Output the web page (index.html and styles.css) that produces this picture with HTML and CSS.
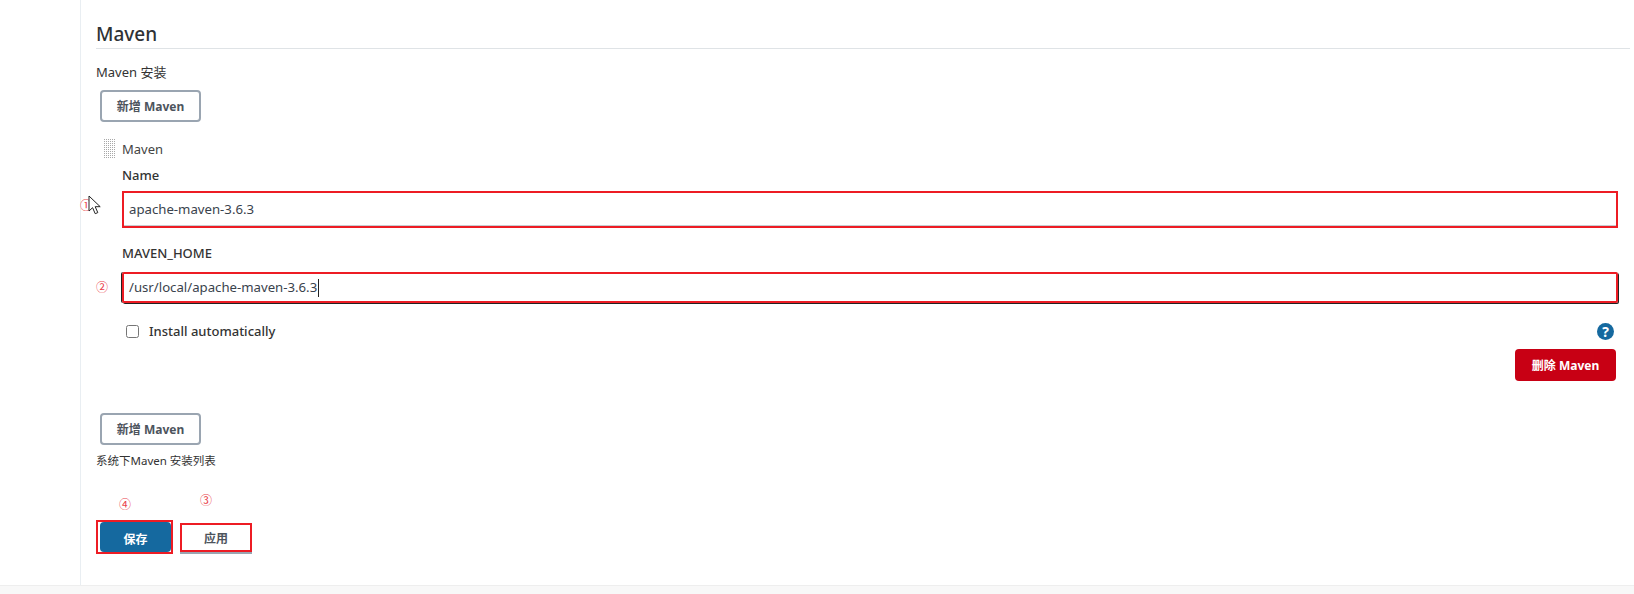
FILE: index.html
```html
<!DOCTYPE html>
<html lang="zh">
<head>
    <meta charset="UTF-8">
    <title>Maven</title>
    <link rel="stylesheet" href="styles.css">
</head>
<body>
    <div class="page">
        <div class="sidebar"></div>
        <div class="main">
            <h2 class="section-title">Maven</h2>
            <div class="field-title">Maven 安装</div>
            <button class="btn btn-add">新增 Maven</button>

            <div class="tool">
                <div class="tool-head">
                    <span class="handle"></span>
                    <span>Maven</span>
                </div>
                <div class="tool-body">
                    <div class="label">Name</div>
                    <div class="mark mark-name">
                        <div class="input input-name">apache-maven-3.6.3</div>
                    </div>
                    <div class="label label-home">MAVEN_HOME</div>
                    <div class="mark mark-home">
                        <div class="input input-home">/usr/local/apache-maven-3.6.3<span class="caret"></span></div>
                    </div>
                    <div class="auto-row">
                        <label class="check"><input type="checkbox"> Install automatically</label>
                        <span class="help">?</span>
                    </div>
                    <div class="delete-row">
                        <button class="btn btn-delete">删除 Maven</button>
                    </div>
                </div>
            </div>

            <button class="btn btn-add btn-add-second">新增 Maven</button>
            <div class="desc">系统下Maven 安装列表</div>

            <div class="actions">
                <div class="mark mark-save"><button class="btn btn-save">保存</button></div>
                <div class="mark mark-apply"><button class="btn btn-apply">应用</button></div>
            </div>
        </div>
    </div>
    <div class="footer"></div>

    <!-- annotations drawn over the screenshot -->
    <span class="note note-1">①</span>
    <svg class="cursor" width="14" height="20" viewBox="0 0 14 20"><path d="M1 1v15l3.6-3.3 2.6 6 2.6-1.1-2.6-5.9h5z" fill="#fff" stroke="#222" stroke-width="1"/></svg>
    <span class="note note-2">②</span>
    <span class="note note-3">③</span>
    <span class="note note-4">④</span>
</body>
</html>
```

FILE: styles.css
```css
html {
    box-sizing: border-box;
    font-size: 14px;
    color: #333;
}
* {
    box-sizing: inherit;
    padding: 0;
    margin: 0;
}
body {
    height: 594px;
    overflow: hidden;
    background: #fff;
    font-family: "Noto Sans", "Noto Sans CJK SC", sans-serif;
}
.page {
    display: flex;
    height: 585px;
}
.sidebar {
    width: 81px;
    border-right: 1px solid #e9eef2;
}
.main {
    flex: 1;
    padding: 0 4px 0 15px;
}

.section-title {
    height: 49px;
    padding-top: 21px;
    border-bottom: 1px solid #dfe3e6;
    font-size: 19px;
    font-weight: 500;
    line-height: 26px;
    color: #2f3235;
}
.field-title {
    margin-top: 14px;
    font-size: 13px;
    line-height: 18px;
}

/* buttons */
.btn {
    display: block;
    border: none;
    border-radius: 4px;
    font-family: inherit;
    font-size: 12px;
    font-weight: 700;
}
.btn-add {
    width: 101px;
    height: 32px;
    margin: 9px 0 0 4px;
    border: 2px solid #9aa5b1;
    background: #fff;
    color: #4d545d;
}
.btn-add-second {
    margin-top: 32px;
}
.btn-delete {
    width: 101px;
    height: 32px;
    background: #c80014;
    color: #fff;
}
.btn-save {
    width: 71px;
    height: 30px;
    padding-top: 3px;
    background: #15699f;
    color: #fff;
}
.btn-apply {
    width: 68px;
    height: 25px;
    border-radius: 0;
    background: #fff;
    color: #4d545d;
}

/* tool block */
.tool-head {
    display: flex;
    align-items: center;
    gap: 7px;
    margin: 17px 0 0 7px;
    height: 20px;
    font-size: 13px;
    color: #444;
}
.handle {
    width: 12px;
    height: 20px;
    background-image: repeating-conic-gradient(#a8a8a8 0 25%, transparent 0 100%);
    background-size: 2px 2px;
}
.tool-body {
    margin: 0 12px 0 26px;
}
.label {
    margin-top: 6px;
    font-size: 13px;
    font-weight: 500;
    line-height: 20px;
}
.label-home {
    margin-top: 15px;
}
.mark {
    border: 2px solid #ed1c24;
}
.mark-name {
    height: 37px;
    margin-top: 6px;
}
.mark-home {
    height: 31px;
    margin-top: 9px;
    border-radius: 2px;
    box-shadow: 1px 1px 0 #222, -1px 0 0 #222;
}
.input {
    padding-left: 5px;
    font-size: 13.2px;
    color: #39424c;
}
.input-name {
    height: 33px;
    border-bottom: 1px solid #c8ccd0;
    line-height: 32px;
}
.input-home {
    line-height: 27px;
}
.caret {
    display: inline-block;
    width: 1px;
    height: 18px;
    margin-left: 1px;
    background: #222;
    vertical-align: middle;
}

.auto-row {
    display: flex;
    justify-content: space-between;
    align-items: center;
    height: 18px;
    margin-top: 19px;
    padding: 0 4px 0 4px;
}
.check {
    display: flex;
    align-items: center;
    gap: 10px;
    font-size: 13px;
    font-weight: 500;
}
.check input {
    width: 13px;
    height: 13px;
}
.help {
    width: 17px;
    height: 17px;
    border-radius: 50%;
    background: #15699f;
    color: #fff;
    font-size: 14px;
    font-weight: 700;
    line-height: 17px;
    text-align: center;
}
.delete-row {
    display: flex;
    justify-content: flex-end;
    margin-top: 9px;
    padding-right: 2px;
}

.desc {
    margin-top: 7px;
    font-size: 11.5px;
    line-height: 18px;
}

.actions {
    display: flex;
    align-items: flex-start;
    gap: 7px;
    margin-top: 50px;
}
.mark-save {
    padding: 0 0 0 2px;
    height: 34px;
}
.mark-apply {
    margin-top: 3px;
    height: 29px;
    box-shadow: 0 2px 0 #9aa5b1;
}

.footer {
    height: 9px;
    background: #f8f8f8;
    border-top: 1px solid #eee;
}

/* red numbers and mouse pointer lying over the page */
.note {
    position: absolute;
    font-size: 12px;
    line-height: 14px;
    color: #e9414a;
}
.note-1 { left: 80px; top: 199px; }
.note-2 { left: 96px; top: 281px; }
.note-3 { left: 200px; top: 494px; }
.note-4 { left: 119px; top: 498px; }
.cursor {
    position: absolute;
    left: 88px;
    top: 195px;
}
```
